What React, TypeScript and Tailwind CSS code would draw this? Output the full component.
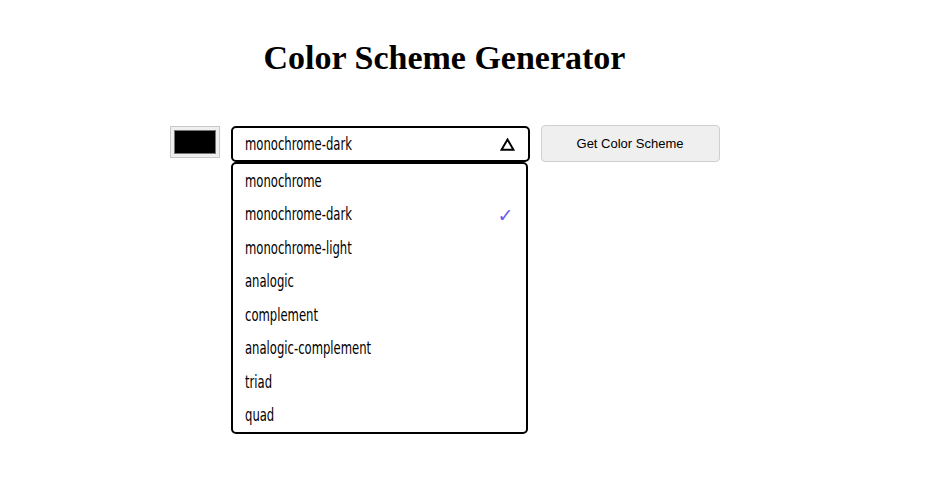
import { useState } from "react";

const schemes = [
  "monochrome",
  "monochrome-dark",
  "monochrome-light",
  "analogic",
  "complement",
  "analogic-complement",
  "triad",
  "quad",
];

const narrow = "font-['Liberation_Sans_Narrow','DejaVu_Sans_Condensed',sans-serif]";

export default function App() {
  const [mode, setMode] = useState("monochrome-dark");

  return (
    <div className="min-h-screen bg-white">
      <div className="w-[889px] flex flex-col items-center pt-[36px]">
        <h1 className="font-['Liberation_Serif',serif] font-bold text-[34px] leading-[44px] text-black">
          Color Scheme Generator
        </h1>

        <div className="mt-[46px] flex items-start gap-[11px]">
          {/* colour picker */}
          <div className="w-[50px] h-[32px] border border-[#c8c8c8] bg-[#efefef] p-[3px]">
            <div className="w-full h-full bg-black border border-[#767676]" />
          </div>

          {/* select */}
          <div className={`w-[299px] ${narrow}`}>
            <div className="h-[36px] border-2 border-black rounded-[5px] flex items-center justify-between pl-[12px] pr-[13px] text-[17px] text-black">
              <span className="inline-block origin-left scale-x-[0.76] pt-[2px]">{mode}</span>
              <svg width="15" height="13" viewBox="0 0 15 13" fill="none">
                <path d="M7.5 1.5 L13.5 11.8 L1.5 11.8 Z" stroke="black" strokeWidth="2" strokeLinejoin="miter" />
              </svg>
            </div>
            <ul className="w-[297px] border-2 border-black rounded-[5px] bg-white">
              {schemes.map((s) => (
                <li
                  key={s}
                  onClick={() => setMode(s)}
                  className="h-[33.5px] flex items-center justify-between pl-[12px] pr-[12px] text-[17px] text-black cursor-pointer"
                >
                  <span className="inline-block origin-left scale-x-[0.76] pt-[1px]">{s}</span>
                  {s === mode && (
                    <span className="text-[#6c5ce7] text-[19px] leading-none font-['DejaVu_Sans',sans-serif] pt-[3px]">✓</span>
                  )}
                </li>
              ))}
            </ul>
          </div>

          {/* button */}
          <button className="w-[179px] h-[37px] -mt-[1px] bg-[#efefef] border border-[#cfcfcf] rounded-[4px] font-['Liberation_Sans',sans-serif] text-[13px] text-black">
            Get Color Scheme
          </button>
        </div>
      </div>
    </div>
  );
}
